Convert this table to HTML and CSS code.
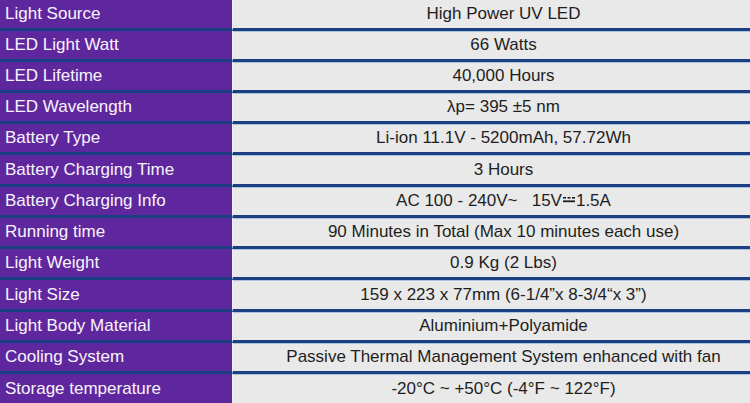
FILE: index.html
```html
<!DOCTYPE html>
<html lang="en">
<head>
<meta charset="utf-8">
<title>Specifications</title>
<link rel="stylesheet" href="styles.css">
</head>
<body>
<div class="spec">
  <div class="row"><div class="key">Light Source</div><div class="val">High Power UV LED</div></div>
  <div class="row"><div class="key">LED Light Watt</div><div class="val">66 Watts</div></div>
  <div class="row"><div class="key">LED Lifetime</div><div class="val">40,000 Hours</div></div>
  <div class="row"><div class="key">LED Wavelength</div><div class="val">λp= 395 ±5 nm</div></div>
  <div class="row"><div class="key">Battery Type</div><div class="val">Li-ion 11.1V - 5200mAh, 57.72Wh</div></div>
  <div class="row tall"><div class="key">Battery Charging Time</div><div class="val">3 Hours</div></div>
  <div class="row"><div class="key">Battery Charging Info</div><div class="val">AC 100 - 240V~&nbsp;&nbsp;&nbsp;15V<svg class="dc" width="12" height="7" viewBox="0 0 12 7"><rect x="0" y="1" width="3" height="1.6" fill="#1e1e1e"/><rect x="4.5" y="1" width="3" height="1.6" fill="#1e1e1e"/><rect x="9" y="1" width="3" height="1.6" fill="#1e1e1e"/><rect x="0" y="4.4" width="12" height="1.8" fill="#1e1e1e"/></svg>1.5A</div></div>
  <div class="row"><div class="key">Running time</div><div class="val">90 Minutes in Total (Max 10 minutes each use)</div></div>
  <div class="row"><div class="key">Light Weight</div><div class="val">0.9 Kg (2 Lbs)</div></div>
  <div class="row tall"><div class="key">Light Size</div><div class="val">159 x 223 x 77mm (6-1/4”x 8-3/4“x 3”)</div></div>
  <div class="row"><div class="key">Light Body Material</div><div class="val">Aluminium+Polyamide</div></div>
  <div class="row"><div class="key">Cooling System</div><div class="val">Passive Thermal Management System enhanced with fan</div></div>
  <div class="row tall last"><div class="key">Storage temperature</div><div class="val">-20°C ~ +50°C (-4°F ~ 122°F)</div></div>
</div>
</body>
</html>
```

FILE: styles.css
```css
html, body {
  margin: 0;
  padding: 0;
  background: #e9e9e9;
}
.spec {
  width: 750px;
  height: 403px;
  overflow: hidden;
  font-family: "Liberation Sans", Arial, sans-serif;
  font-size: 17px;
}
.row {
  display: grid;
  grid-template-columns: 233px 1fr;
  height: 31px;
}
.row.tall {
  height: 32px;
}
.key, .val {
  display: flex;
  align-items: center;
  border-bottom: 3px solid #1c3f84;
  line-height: 1;
}
.key {
  background: #5f279e;
  color: #f7f4fb;
  padding-left: 5px;
  padding-bottom: 1px;
  border-right: 1px solid #f3f1f6;
}
.val {
  background: #e9e9e9;
  color: #1e1e1e;
  justify-content: center;
  padding-left: 24px;
  padding-bottom: 1px;
}
.row + .row .val {
  box-shadow: inset 0 1px 0 #a9c2de;
}
.row.last .key, .row.last .val {
  border-bottom: none;
}
.row.last {
  height: 29px;
}
.dc {
  margin: 0 1px 0 1px;
  position: relative;
  top: -1px;
}
```
